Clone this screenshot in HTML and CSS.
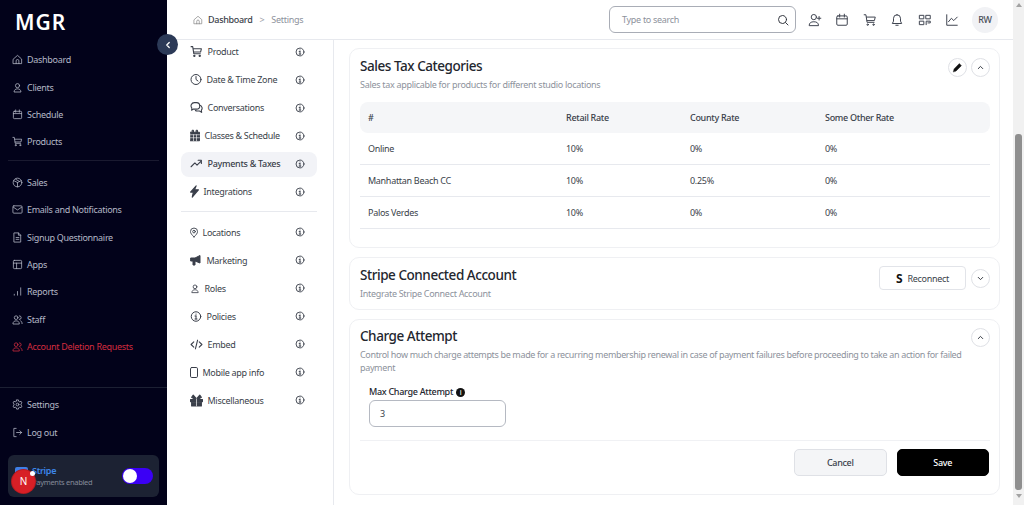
FILE: index.html
```html
<!DOCTYPE html>
<html lang="en">
<head>
    <meta charset="UTF-8">
    <meta name="viewport" content="width=device-width, initial-scale=1.0">
    <title>Settings</title>
    <link rel="stylesheet" href="styles.css">
</head>
<body>
    <svg class="defs" aria-hidden="true">
        <symbol id="i-home" viewBox="0 0 24 24"><path d="M3 11l9-8 9 8v10H3z"/><path d="M9 21v-6a3 3 0 0 1 6 0v6"/></symbol>
        <symbol id="i-user" viewBox="0 0 24 24"><circle cx="12" cy="8" r="4.500"/><path d="M4.500 21c.5-4 3-6 7.500-6s7 2 7.500 6z"/></symbol>
        <symbol id="i-cal" viewBox="0 0 24 24"><rect x="3" y="5" width="18" height="16" rx="2"/><path d="M3 10h18M8 2v5M16 2v5"/></symbol>
        <symbol id="i-cart" viewBox="0 0 24 24"><path d="M2 3h3l2 13h12M6 7h15l-1.500 6H7"/><circle cx="8" cy="20" r="1.200"/><circle cx="18" cy="20" r="1.200"/></symbol>
        <symbol id="i-box" viewBox="0 0 24 24"><circle cx="12" cy="12" r="9.500"/><path d="M4 8l8 4 8-4M12 12v9.500M8 5l8 4.500"/></symbol>
        <symbol id="i-mail" viewBox="0 0 24 24"><rect x="2" y="4" width="20" height="16" rx="2"/><path d="M3 7l9 6 9-6"/></symbol>
        <symbol id="i-doc" viewBox="0 0 24 24"><path d="M5 2h9l5 5v15H5z"/><path d="M9 12h6M9 16h6M14 2v5h5"/></symbol>
        <symbol id="i-apps" viewBox="0 0 24 24"><rect x="3" y="3" width="18" height="18" rx="2"/><path d="M3 9h18M10 9v12"/></symbol>
        <symbol id="i-bars" viewBox="0 0 24 24"><path d="M5 20v-2M12 20v-8M19 20V4"/></symbol>
        <symbol id="i-users" viewBox="0 0 24 24"><circle cx="9" cy="8" r="4"/><path d="M2 21c0-4 3-6 7-6s7 2 7 6zM16 4a4 4 0 0 1 0 8M19 15c2 1 3 3 3 6"/></symbol>
        <symbol id="i-gear" viewBox="0 0 24 24"><circle cx="12" cy="12" r="3"/><path d="M10 2h4l.6 3 2.400 1.200 2.800-1.200 2 3.500-2.300 2 0 3 2.300 2-2 3.500-2.800-1.200-2.400 1.200-.6 3h-4l-.6-3L7 17.800l-2.800 1.200-2-3.500 2.300-2v-3l-2.300-2 2-3.500L7 6.200 9.400 5z"/></symbol>
        <symbol id="i-logout" viewBox="0 0 24 24"><path d="M9 3H4v18h5M10 12h11M17 8l4 4-4 4"/></symbol>
        <symbol id="i-info" viewBox="0 0 24 24"><circle cx="12" cy="12" r="9.500"/><path d="M12 11v6M10 11h2M10 17h4M12 7v.5"/></symbol>
        <symbol id="i-clock" viewBox="0 0 24 24"><circle cx="12" cy="12" r="10"/><path d="M12 6v6l4 3"/></symbol>
        <symbol id="i-chat" viewBox="0 0 24 24"><path d="M6 15l-3 2 .5-4A6 6 0 0 1 8 3h4a6 6 0 0 1 0 12z"/><path d="M18 8a5.500 5.500 0 0 1 3 9l.5 4-4-2.500H13a5 5 0 0 1-3-1"/></symbol>
        <symbol id="i-trend" viewBox="0 0 24 24"><path d="M2 18l7-7 4 4 8-8M15 6h6v6"/></symbol>
        <symbol id="i-code" viewBox="0 0 24 24"><path d="M7 7l-5 5 5 5M17 7l5 5-5 5M14 4l-4 16"/></symbol>
        <symbol id="i-chev-up" viewBox="0 0 24 24"><path d="M6 15l6-6 6 6"/></symbol>
        <symbol id="i-chev-down" viewBox="0 0 24 24"><path d="M6 9l6 6 6-6"/></symbol>
    </svg>

    <div class="app">
        <aside class="sidebar">
            <div class="logo">MGR</div>
            <nav class="side-group">
                <a class="side-link"><svg class="ico"><use href="#i-home"/></svg>Dashboard</a>
                <a class="side-link"><svg class="ico"><use href="#i-user"/></svg>Clients</a>
                <a class="side-link"><svg class="ico"><use href="#i-cal"/></svg>Schedule</a>
                <a class="side-link"><svg class="ico"><use href="#i-cart"/></svg>Products</a>
            </nav>
            <hr class="side-rule">
            <nav class="side-group">
                <a class="side-link"><svg class="ico"><use href="#i-box"/></svg>Sales</a>
                <a class="side-link"><svg class="ico"><use href="#i-mail"/></svg>Emails and Notifications</a>
                <a class="side-link"><svg class="ico"><use href="#i-doc"/></svg>Signup Questionnaire</a>
                <a class="side-link"><svg class="ico"><use href="#i-apps"/></svg>Apps</a>
                <a class="side-link"><svg class="ico"><use href="#i-bars"/></svg>Reports</a>
                <a class="side-link"><svg class="ico"><use href="#i-users"/></svg>Staff</a>
                <a class="side-link danger"><svg class="ico"><use href="#i-users"/></svg>Account Deletion Requests</a>
            </nav>
            <div class="side-bottom">
                <a class="side-link"><svg class="ico"><use href="#i-gear"/></svg>Settings</a>
                <a class="side-link"><svg class="ico"><use href="#i-logout"/></svg>Log out</a>
                <div class="stripe-card">
                    <span class="stripe-logo"></span>
                    <div class="stripe-text">
                        <div class="stripe-name">Stripe</div>
                        <div class="stripe-sub">Payments enabled</div>
                    </div>
                    <span class="toggle"><span class="knob"></span></span>
                </div>
            </div>
            <span class="badge">N</span>
            <span class="badge-dot"></span>
        </aside>

        <button class="collapse"><svg class="ico" viewBox="0 0 24 24"><path d="M15 6l-6 6 6 6"/></svg></button>

        <div class="main">
            <header class="topbar">
                <div class="crumbs">
                    <svg class="ico"><use href="#i-home"/></svg>
                    <span class="crumb-on">Dashboard</span>
                    <span class="crumb-sep">&gt;</span>
                    <span class="crumb-off">Settings</span>
                </div>
                <div class="search">
                    <span>Type to search</span>
                    <svg class="ico" viewBox="0 0 24 24"><circle cx="11" cy="11" r="8"/><path d="M17 17l5 5"/></svg>
                </div>
                <div class="top-icons">
                    <svg class="ico" viewBox="0 0 24 24"><circle cx="10" cy="7" r="4.500"/><path d="M2 21c0-4 3-6 8-6s8 2 8 6zM19 6v6M16 9h6"/></svg>
                    <svg class="ico"><use href="#i-cal"/></svg>
                    <svg class="ico"><use href="#i-cart"/></svg>
                    <svg class="ico" viewBox="0 0 24 24"><path d="M12 3a6 6 0 0 0-6 6v5l-2 4h16l-2-4V9a6 6 0 0 0-6-6zM10 21h4"/></svg>
                    <svg class="ico" viewBox="0 0 24 24"><rect x="3" y="4" width="7" height="6"/><rect x="14" y="4" width="7" height="6"/><rect x="3" y="14" width="7" height="6"/><path d="M14 20v-6h7v3h-4"/></svg>
                    <svg class="ico" viewBox="0 0 24 24"><path d="M3 3v18h18M6 15l5-6 4 4 6-6"/></svg>
                </div>
                <div class="avatar">RW</div>
            </header>

            <div class="content">
                <nav class="settings-nav">
                    <a class="set-link"><svg class="ico"><use href="#i-cart"/></svg><span>Product</span><svg class="ico info"><use href="#i-info"/></svg></a>
                    <a class="set-link"><svg class="ico w12"><use href="#i-clock"/></svg><span>Date &amp; Time Zone</span><svg class="ico info"><use href="#i-info"/></svg></a>
                    <a class="set-link"><svg class="ico"><use href="#i-chat"/></svg><span>Conversations</span><svg class="ico info"><use href="#i-info"/></svg></a>
                    <a class="set-link"><svg class="ico solid w10" viewBox="2 1 20 21"><path d="M3 5h18v17H3zM7 1h2v5H7zM15 1h2v5h-2z"/><path class="cut" d="M3 10h18M9 10v12M15 10v12M3 16h18"/></svg><span>Classes &amp; Schedule</span><svg class="ico info"><use href="#i-info"/></svg></a>
                    <a class="set-link active"><svg class="ico"><use href="#i-trend"/></svg><span>Payments &amp; Taxes</span><svg class="ico info"><use href="#i-info"/></svg></a>
                    <a class="set-link"><svg class="ico solid w9" viewBox="4 2 16 20"><path d="M15 2l-3 7h7L8 22l2-9H5z"/></svg><span>Integrations</span><svg class="ico info"><use href="#i-info"/></svg></a>
                    <hr class="set-rule">
                    <a class="set-link"><svg class="ico w8" viewBox="3 1 18 22"><path d="M12 22C7 17 4 13.500 4 10a8 8 0 0 1 16 0c0 3.500-3 7-8 12z"/><circle cx="12" cy="10" r="3"/></svg><span>Locations</span><svg class="ico info"><use href="#i-info"/></svg></a>
                    <a class="set-link"><svg class="ico solid w12" viewBox="0 0 24 24"><path d="M2 7h8l10-5v15L10 13v8H6v-8H2z"/></svg><span>Marketing</span><svg class="ico info"><use href="#i-info"/></svg></a>
                    <a class="set-link"><svg class="ico w10"><use href="#i-user"/></svg><span>Roles</span><svg class="ico info"><use href="#i-info"/></svg></a>
                    <a class="set-link"><svg class="ico w12"><use href="#i-info"/></svg><span>Policies</span><svg class="ico info"><use href="#i-info"/></svg></a>
                    <a class="set-link"><svg class="ico"><use href="#i-code"/></svg><span>Embed</span><svg class="ico info"><use href="#i-info"/></svg></a>
                    <a class="set-link"><svg class="ico w8" viewBox="4 1 16 22"><rect x="5" y="2" width="14" height="20" rx="2.500"/></svg><span>Mobile app info</span><svg class="ico info"><use href="#i-info"/></svg></a>
                    <a class="set-link"><svg class="ico solid" viewBox="0 0 24 24"><path d="M1 10h22v4H1zM3 15h18v7H3zM6 2l6 7 6-7 3 4-6 4H9L3 6z"/><path class="cut" d="M12 9v13"/></svg><span>Miscellaneous</span><svg class="ico info"><use href="#i-info"/></svg></a>
                </nav>

                <section class="panels">
                    <div class="card card-tax">
                        <div class="card-head">
                            <div>
                                <h2>Sales Tax Categories</h2>
                                <p>Sales tax applicable for products for different studio locations</p>
                            </div>
                            <div class="card-actions">
                                <button class="round"><svg class="ico solid pencil" viewBox="0 0 24 24"><path d="M3 21l1.500-6L16 3.500l4.500 4.500L9 19.500z"/></svg></button>
                                <button class="round"><svg class="ico"><use href="#i-chev-up"/></svg></button>
                            </div>
                        </div>
                        <table>
                            <thead>
                                <tr><th>#</th><th>Retail Rate</th><th>County Rate</th><th>Some Other Rate</th></tr>
                            </thead>
                            <tbody>
                                <tr><td>Online</td><td>10%</td><td>0%</td><td>0%</td></tr>
                                <tr><td>Manhattan Beach CC</td><td>10%</td><td>0.25%</td><td>0%</td></tr>
                                <tr><td>Palos Verdes</td><td>10%</td><td>0%</td><td>0%</td></tr>
                            </tbody>
                        </table>
                    </div>

                    <div class="card card-stripe">
                        <div class="card-head">
                            <div>
                                <h2>Stripe Connected Account</h2>
                                <p>Integrate Stripe Connect Account</p>
                            </div>
                            <div class="card-actions">
                                <button class="reconnect"><b>S</b>Reconnect</button>
                                <button class="round"><svg class="ico"><use href="#i-chev-down"/></svg></button>
                            </div>
                        </div>
                    </div>

                    <div class="card card-charge">
                        <div class="card-head">
                            <div>
                                <h2>Charge Attempt</h2>
                                <p>Control how much charge attempts be made for a recurring membership renewal in case of payment failures before proceeding to take an action for failed payment</p>
                            </div>
                            <div class="card-actions">
                                <button class="round"><svg class="ico"><use href="#i-chev-up"/></svg></button>
                            </div>
                        </div>
                        <div class="field">
                            <label>Max Charge Attempt <span class="dot-info">i</span></label>
                            <div class="input">3</div>
                        </div>
                        <div class="form-foot">
                            <button class="btn btn-cancel">Cancel</button>
                            <button class="btn btn-save">Save</button>
                        </div>
                    </div>
                </section>
            </div>
        </div>

        <div class="scrollbar">
            <span class="arrow-up"></span>
            <span class="thumb"></span>
            <span class="arrow-down"></span>
        </div>
    </div>
</body>
</html>
```

FILE: styles.css
```css
* {
    box-sizing: border-box;
}

body {
    margin: 0;
    font-family: 'Noto Sans', sans-serif;
    font-size: 9px;
    letter-spacing: -0.3px;
    color: #2b2f38;
    background-color: white;
    overflow: hidden;
}

button {
    letter-spacing: inherit;
}

.defs {
    display: none;
}

.ico {
    width: 12px;
    height: 12px;
    flex: none;
    fill: none;
    stroke: currentColor;
    stroke-width: 1.8;
    stroke-linecap: round;
    stroke-linejoin: round;
}

.ico.solid {
    fill: currentColor;
}

.ico .cut {
    fill: none;
    stroke: white;
    stroke-width: 1.2;
}

.app {
    position: relative;
    display: flex;
    height: 505px;
    overflow: hidden;
}

/* Dark sidebar */
.sidebar {
    position: relative;
    width: 167px;
    flex: none;
    background-color: #02021a;
    color: #b4b8c6;
    display: flex;
    flex-direction: column;
}

.logo {
    height: 46px;
    padding: 7px 0 0 15px;
    font-size: 21px;
    line-height: 30px;
    font-weight: 600;
    letter-spacing: 1px;
    color: white;
}

.side-link {
    display: flex;
    align-items: center;
    gap: 4px;
    height: 27.4px;
    padding-left: 12px;
}

.side-link .ico {
    width: 11px;
    height: 11px;
    stroke-width: 1.7;
}

.side-link.danger {
    color: #d22c3f;
}

.side-rule {
    height: 1px;
    margin: 4px 8px 8px;
    border: none;
    background-color: #1a1a30;
}

.side-bottom {
    margin-top: auto;
    padding-top: 3px;
    padding-bottom: 8px;
    border-top: 1px solid #1c2033;
}

.stripe-card {
    display: flex;
    align-items: center;
    height: 42px;
    margin: 9px 8px 0;
    padding: 0 6px 0 7px;
    background-color: #1c2233;
    border-radius: 6px;
}

.stripe-logo {
    width: 13px;
    height: 13px;
    flex: none;
    margin-top: -6px;
    border-radius: 2px;
    background-color: #3f7fe6;
}

.stripe-text {
    flex: 1;
    margin-left: 4px;
    font-size: 7.5px;
}

.stripe-name {
    color: #3d86ea;
    font-size: 9px;
    font-weight: 600;
    line-height: 12px;
}

.stripe-sub {
    color: #858b99;
    line-height: 11px;
}

.toggle {
    display: block;
    width: 31px;
    height: 16px;
    padding: 1px;
    border-radius: 8px;
    background-color: #3b00f5;
}

.knob {
    display: block;
    width: 14px;
    height: 14px;
    border-radius: 50%;
    background-color: white;
}

/* Dev overlay badge, sits over the stripe card */
.badge {
    position: absolute;
    left: 12px;
    top: 470px;
    width: 23px;
    height: 23px;
    border-radius: 50%;
    background-color: #d71f26;
    box-shadow: 0 0 0 1px #b31b21;
    color: white;
    font-size: 10px;
    line-height: 23px;
    text-align: center;
}

.badge-dot {
    position: absolute;
    left: 30px;
    top: 471px;
    width: 5px;
    height: 5px;
    border-radius: 50%;
    background-color: white;
}

.collapse {
    position: absolute;
    left: 157px;
    top: 34px;
    z-index: 2;
    display: flex;
    align-items: center;
    justify-content: center;
    width: 21px;
    height: 21px;
    padding: 0;
    border: none;
    border-radius: 50%;
    background-color: #2c3a57;
    color: white;
}

.collapse .ico {
    width: 10px;
    height: 10px;
    stroke-width: 3;
}

/* Right of sidebar */
.main {
    flex: 1;
    min-width: 0;
    display: flex;
    flex-direction: column;
}

.topbar {
    display: flex;
    align-items: center;
    height: 40px;
    padding-left: 26px;
    border-bottom: 1px solid #e7e9ee;
}

.crumbs {
    flex: 1;
    display: flex;
    align-items: center;
}

.crumbs .ico {
    width: 10px;
    height: 10px;
    stroke-width: 1.5;
    color: #777;
}

.crumb-on {
    margin-left: 5px;
    font-weight: 500;
    color: #3a3f4a;
}

.crumb-sep {
    margin: 0 7px;
    color: #9a9ea8;
}

.crumb-off {
    color: #8d929c;
}

.search {
    display: flex;
    align-items: center;
    justify-content: space-between;
    width: 187px;
    height: 27px;
    padding: 0 6px 0 12px;
    border: 1px solid #a9adb6;
    border-radius: 6px;
    color: #8d929c;
}

.search .ico {
    width: 12px;
    height: 12px;
    color: #2b2f38;
    stroke-width: 1.9;
}

.top-icons {
    display: flex;
    align-items: center;
    gap: 13.4px;
    margin-left: 12px;
    color: #3e434f;
}

.top-icons .ico {
    width: 14px;
    height: 14px;
    stroke-width: 1.7;
}

.avatar {
    width: 26px;
    height: 26px;
    margin: 0 15px 0 13px;
    border-radius: 50%;
    background-color: #f1f2f5;
    font-weight: 500;
    line-height: 26px;
    text-align: center;
    color: #4a4f5a;
}

.content {
    flex: 1;
    min-height: 0;
    display: flex;
}

/* Settings menu */
.settings-nav {
    width: 167px;
    flex: none;
    padding: 0 16px 0 14px;
    border-right: 1px solid #e7e9ee;
}

.set-link {
    display: flex;
    align-items: center;
    gap: 4.5px;
    height: 25px;
    margin-bottom: 3px;
    padding: 0 12.5px 2px 9px;
    border-radius: 8px;
    color: #3a3f4a;
}

.set-link .ico {
    width: 13px;
    height: 13px;
    stroke-width: 2;
}

.set-link .w8 {
    width: 8px;
}

.set-link .w9 {
    width: 9px;
}

.set-link .w10 {
    width: 10px;
}

.set-link .w12 {
    width: 12px;
}

.set-link.active {
    background-color: #f2f3f7;
    font-weight: 500;
}

.set-link .info {
    width: 10px;
    height: 10px;
    margin-left: auto;
    stroke-width: 2.2;
}

.set-rule {
    height: 1px;
    margin: 6px 0 8.5px;
    border: none;
    background-color: #e7e9ee;
}

/* Cards */
.panels {
    flex: 1;
    padding: 8px 13px 0 15px;
    min-width: 0;
}

.card {
    border: 1px solid #eff0f3;
    border-radius: 10px;
    margin-bottom: 9px;
    padding: 0 9px 0 10px;
}

.card-tax {
    height: 200px;
}

.card-stripe {
    height: 53px;
}

.card-charge {
    height: 176px;
}

.card-head {
    display: flex;
    justify-content: space-between;
    padding-top: 6px;
}

.card-head > div:first-child {
    flex: 1;
}

h2 {
    margin: 0;
    font-size: 13.5px;
    line-height: 20px;
    font-weight: 500;
    letter-spacing: -0.45px;
    color: #23262e;
}

.card-head p {
    margin: 0;
    line-height: 12.5px;
    color: #8d929c;
}

.card-tax .card-head {
    padding-top: 7px;
}

.card-tax .card-head p {
    margin-top: 3px;
}

.card-stripe .card-head {
    padding-top: 7px;
}

.card-stripe .card-head p {
    margin-top: 3px;
}

.card-stripe .card-actions {
    margin-top: 1px;
}

.card-charge .card-head {
    padding-top: 6px;
}

.card-charge .card-head p {
    margin-top: 3px;
    max-width: 610px;
    letter-spacing: -0.35px;
}

.card-actions {
    display: flex;
    align-items: center;
    gap: 4px;
    align-self: flex-start;
    margin-top: 2px;
}

.round {
    display: flex;
    align-items: center;
    justify-content: center;
    width: 19px;
    height: 19px;
    padding: 0;
    border: 1px solid #dfe1e6;
    border-radius: 50%;
    background-color: white;
    color: #2b2f38;
}

.round .ico {
    width: 9px;
    height: 9px;
    stroke-width: 2.5;
}

.round .pencil {
    width: 11px;
    height: 11px;
    stroke-width: 1;
    color: #111;
}

.reconnect {
    display: flex;
    align-items: center;
    justify-content: center;
    gap: 5px;
    width: 87px;
    height: 24px;
    margin-right: 1px;
    padding: 0;
    border: 1px solid #e2e4e9;
    border-radius: 4px;
    background-color: white;
    font-family: inherit;
    font-size: 9px;
    color: #3a3f4a;
}

.reconnect b {
    font-size: 12px;
    color: #111;
}

table {
    width: 100%;
    margin-top: 10px;
    border-collapse: separate;
    border-spacing: 0;
    table-layout: fixed;
    font-size: 9px;
}

th {
    height: 31px;
    padding: 0 8px;
    background-color: #f5f6f8;
    font-weight: 500;
    text-align: left;
    color: #3a3f4a;
}

th:first-child {
    width: 198px;
    border-radius: 8px 0 0 8px;
}

th:nth-child(2) {
    width: 124px;
}

th:nth-child(3) {
    width: 135px;
}

th:last-child {
    border-radius: 0 8px 8px 0;
}

td {
    height: 32px;
    padding: 0 8px;
    border-bottom: 1px solid #e7e9ee;
    color: #3a3f4a;
}

.field {
    margin: 11px 0 0 9px;
}

.field label {
    display: block;
    font-weight: 500;
    line-height: 14px;
    color: #23262e;
}

.dot-info {
    display: inline-block;
    width: 9px;
    height: 9px;
    margin-left: 1px;
    border-radius: 50%;
    background-color: #111;
    color: white;
    font-size: 7px;
    line-height: 9px;
    text-align: center;
    vertical-align: 0;
}

.input {
    width: 137px;
    height: 27px;
    margin-top: 1px;
    padding-left: 10px;
    border: 1px solid #b5b9c2;
    border-radius: 6px;
    line-height: 25px;
    color: #3a3f4a;
}

.form-foot {
    display: flex;
    justify-content: flex-end;
    gap: 10px;
    margin-top: 13px;
    padding-top: 8px;
    padding-right: 1px;
    border-top: 1px solid #f0f1f4;
}

.btn {
    width: 92.5px;
    height: 27px;
    padding: 0;
    border-radius: 5px;
    font-family: inherit;
    font-size: 9px;
    font-weight: 500;
}

.btn-cancel {
    border: 1px solid #dfe1e6;
    background-color: #f4f5f7;
    color: #3a3f4a;
}

.btn-save {
    border: 1px solid black;
    background-color: black;
    color: white;
}

/* Page scrollbar, drawn because the shot is scrolled down */
.scrollbar {
    position: relative;
    width: 11px;
    flex: none;
    display: flex;
    flex-direction: column;
    align-items: center;
    background-color: #f1f1f1;
}

.arrow-up {
    margin-top: 3px;
    border: 3.5px solid transparent;
    border-top: none;
    border-bottom: 4px solid #a3a3a3;
}

.thumb {
    width: 7px;
    height: 356px;
    margin-top: 127px;
    border-radius: 3px;
    background-color: #8f8f8f;
}

.arrow-down {
    margin-top: 4px;
    border: 3.5px solid transparent;
    border-bottom: none;
    border-top: 4px solid #a3a3a3;
}
```
